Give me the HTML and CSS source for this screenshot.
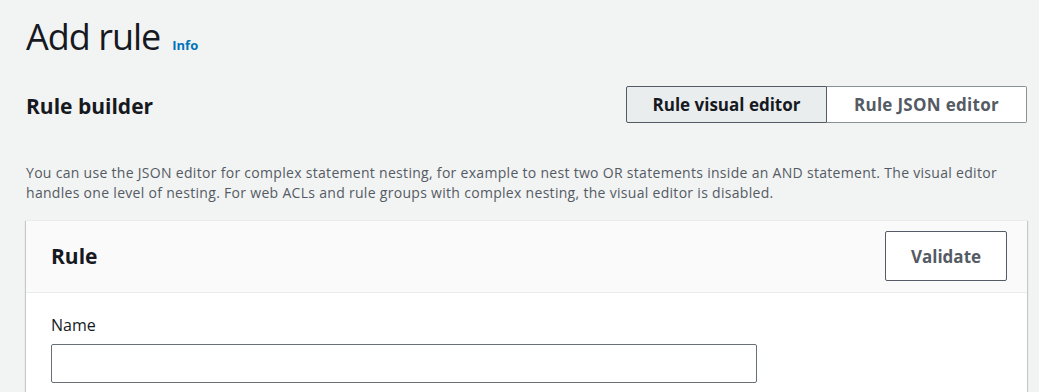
FILE: index.html
```html
<!DOCTYPE html>
<html lang="en">
<head>
  <meta charset="UTF-8">
  <meta name="viewport" content="width=device-width, initial-scale=1.0">
  <title>Add rule</title>
  <link rel="stylesheet" href="styles.css">
</head>
<body>
  <div class="page">
    <div class="page-header">
      <h1>Add rule</h1>
      <a href="#" class="info-link">Info</a>
    </div>

    <div class="builder-header">
      <h2>Rule builder</h2>
      <div class="segmented">
        <button class="segment active">Rule visual editor</button>
        <button class="segment">Rule JSON editor</button>
      </div>
    </div>

    <p class="description">You can use the JSON editor for complex statement nesting, for example to nest two OR statements inside an AND statement. The visual editor handles one level of nesting. For web ACLs and rule groups with complex nesting, the visual editor is disabled.</p>

    <div class="card">
      <div class="card-header">
        <h2>Rule</h2>
        <button class="btn">Validate</button>
      </div>
      <div class="card-body">
        <div class="input-group">
          <label for="name">Name</label>
          <input type="text" id="name">
        </div>
      </div>
    </div>
  </div>
</body>
</html>
```

FILE: styles.css
```css
/* Universal Styling */
* {
  margin: 0;
  padding: 0;
  box-sizing: border-box;
}

body {
  font-family: 'Open Sans', 'Noto Sans', sans-serif;
  background-color: #f2f3f3;
  color: #16191f;
  height: 100vh;
  overflow: hidden;
}

.page {
  padding: 14px 12px 0 26px;
}

.page-header {
  display: flex;
  align-items: baseline;
  gap: 12px;
}

.page-header h1 {
  font-size: 36px;
  font-weight: 400;
  line-height: 46px;
  letter-spacing: -1px;
}

.info-link {
  font-size: 13px;
  font-weight: 700;
  color: #0073bb;
  text-decoration: none;
}

.builder-header {
  display: flex;
  justify-content: space-between;
  align-items: center;
  margin-top: 26px;
}

h2 {
  font-size: 21px;
  font-weight: 700;
  line-height: 28px;
}

.builder-header h2 {
  padding-top: 3px;
}

.segmented {
  display: flex;
}

.segment {
  font-family: inherit;
  font-size: 17px;
  font-weight: 700;
  color: #545b64;
  background-color: #fff;
  border: 1px solid #545b64;
  height: 37px;
  width: 200px;
  cursor: pointer;
}

.segment:first-child {
  border-radius: 2px 0 0 2px;
  width: 201px;
}

.segment:last-child {
  border-left: none;
  border-color: #879196;
  border-radius: 0 2px 2px 0;
  letter-spacing: 0.3px;
}

.segment.active {
  background-color: #eaeded;
  color: #16191f;
}

.description {
  font-size: 14px;
  line-height: 20px;
  letter-spacing: 0.3px;
  color: #545b64;
  margin-top: 40px;
  max-width: 1005px;
}

.card {
  margin-top: 17px;
  width: 1001px;
  background-color: #fff;
  border-top: 1px solid #eaeded;
  box-shadow: 0 1px 1px 0 rgba(0, 28, 36, 0.3), 1px 1px 1px 0 rgba(0, 28, 36, 0.15), -1px 1px 1px 0 rgba(0, 28, 36, 0.15);
}

.card-header {
  display: flex;
  justify-content: space-between;
  align-items: center;
  background-color: #fafafa;
  border-bottom: 1px solid #eaeded;
  padding: 10px 20px 11px 25px;
}

.btn {
  font-family: inherit;
  font-size: 17px;
  font-weight: 700;
  color: #545b64;
  background-color: #fff;
  border: 1px solid #545b64;
  border-radius: 2px;
  width: 122px;
  height: 50px;
  cursor: pointer;
}

.card-body {
  padding: 21px 25px 20px;
}

.input-group label {
  display: block;
  font-size: 16px;
  line-height: 22px;
  margin-bottom: 8px;
}

.input-group input {
  width: 706px;
  height: 39px;
  border: 1px solid #687078;
  border-radius: 2px;
  background-color: #fff;
  font-family: inherit;
  font-size: 14px;
  padding: 4px 12px;
}
```
